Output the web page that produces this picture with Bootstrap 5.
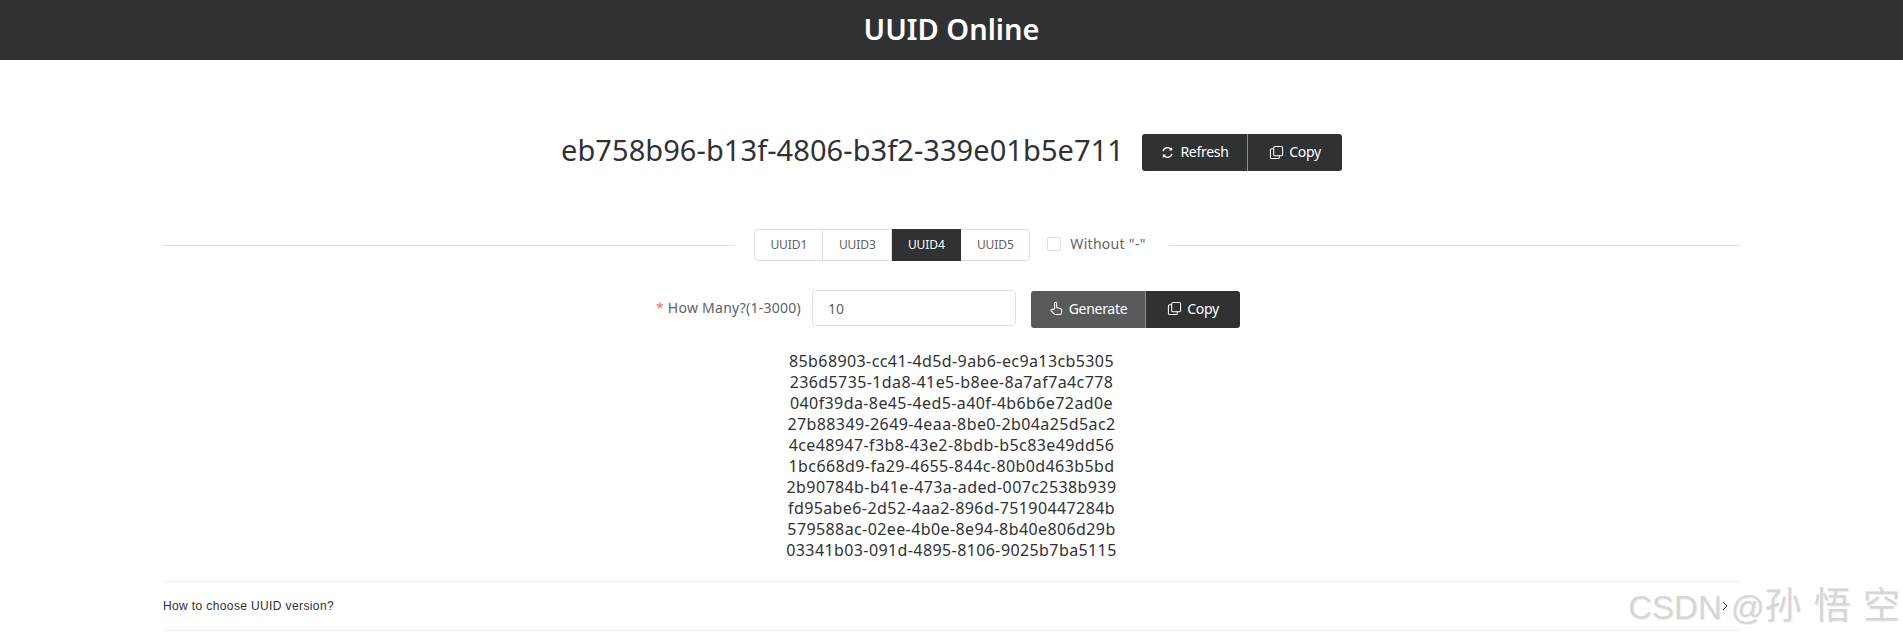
<!DOCTYPE html>
<html lang="en">
<head>
    <meta charset="UTF-8">
    <meta name="viewport" content="width=device-width, initial-scale=1.0">
    <link href="https://cdn.jsdelivr.net/npm/bootstrap@5.3.0/dist/css/bootstrap.min.css" rel="stylesheet">
    <title>UUID Online</title>
    <style>
        body { font-family: "Noto Sans", "Noto Sans CJK SC", sans-serif; color: #303133; overflow: hidden; height: 640px; position: relative; }
        .top-bar { height: 60px; background: #303133; color: #fff; font-size: 29px; font-weight: 600; line-height: 58px; text-align: center; }
        .page-wrap { margin: 0 163px; }
        .uuid-main { padding-top: 74px; height: 169px; gap: 18px; }
        .uuid-text { font-size: 29px; letter-spacing: .07px; line-height: 32px; color: #303133; }
        .dark-btn { background: #303133; border: 0; border-radius: 0; color: #fff; font-size: 14px; letter-spacing: -.3px; line-height: 1; height: 37px; padding: 0 0 1px; display: flex; align-items: center; justify-content: center; gap: 5px; }
        .dark-btn:first-child { border-radius: 3px 0 0 3px; border-right: 1px solid #8c8d8f; }
        .dark-btn:last-child { border-radius: 0 3px 3px 0; }
        .dark-btn.light { background: #58595b; }
        .dark-btn svg { width: 15px; height: 15px; }
        .w-refresh { width: 106px; } .w-copy { width: 94px; } .w-gen { width: 115px; }
        .rule-row { height: 32px; }
        .rule-line { flex: 1; height: 1px; background: #dcdfe6; margin-top: 1px; }
        .tab-group { margin: 0 17px 0 20px; display: flex; }
        .tab-item { width: 69px; height: 32px; border: 1px solid #dcdfe6; border-left: 0; background: #fff; font-size: 12px; letter-spacing: -.1px; color: #606266; display: flex; align-items: center; justify-content: center; }
        .tab-item:first-child { border-left: 1px solid #dcdfe6; border-radius: 4px 0 0 4px; }
        .tab-item:last-child { border-radius: 0 4px 4px 0; }
        .tab-item.on { background: #303133; border-color: #303133; color: #fff; }
        .check-wrap { font-size: 14px; letter-spacing: .3px; color: #606266; gap: 9px; margin-right: 23px; margin-top: -3px; }
        .check-box { width: 14px; height: 14px; border: 1px solid #dcdfe6; border-radius: 2px; background: #fff; }
        .form-line { margin-top: 29px; height: 38px; padding-right: 7px; }
        .how-label { font-size: 14px; letter-spacing: .25px; color: #606266; margin-right: 11px; margin-top: -4px; }
        .how-label span { color: #f56c6c; }
        .how-input { width: 204px; height: 36px; border: 1px solid #dcdfe6; border-radius: 4px; font-size: 14px; color: #606266; padding: 0 15px; margin-right: 15px; margin-top: -2px; }
        .uuid-list { margin-top: 23px; font-size: 16px; letter-spacing: .4px; line-height: 21px; text-align: center; height: 230px; }
        .faq-row { height: 50px; border-top: 1px solid #ebeef5; border-bottom: 1px solid #ebeef5; font-family: "Liberation Sans", sans-serif; font-size: 12px; letter-spacing: .38px; color: #303133; }
        .faq-row svg { margin-right: 12px; }
        .water-mark { position: absolute; right: 2px; top: 585px; font-family: "Liberation Sans", "Noto Sans CJK SC", sans-serif; font-size: 33px; line-height: 44px; color: #d6d6d6; text-shadow: 1px 1px 1px #eee; white-space: nowrap; }
        .water-mark span { font-size: 37px; letter-spacing: 1px; }
    </style>
</head>
<body>
    <header class="top-bar">UUID Online</header>
    <main class="page-wrap">
        <section class="uuid-main d-flex justify-content-center align-items-start">
            <div class="uuid-text">eb758b96-b13f-4806-b3f2-339e01b5e711</div>
            <div class="d-flex">
                <button class="dark-btn w-refresh" type="button">
                    <svg viewBox="0 0 16 16" fill="none" stroke="#fff" stroke-width="1.4"><path d="M3.200 6.500a5 5 0 0 1 8.800-1.700M12.800 9.500a5 5 0 0 1-8.800 1.700"/><path d="M12.500 2.800v2.500H10M3.500 13.200v-2.500H6" stroke-width="1.100"/></svg>Refresh</button>
                <button class="dark-btn w-copy" type="button">
                    <svg viewBox="0 0 16 16" fill="none" stroke="#fff" stroke-width="1.100"><rect x="5" y="1.500" width="9.500" height="10" rx="1.500"/><path d="M5 4H3a1.500 1.500 0 0 0-1.500 1.500V13A1.500 1.500 0 0 0 3 14.500h6.500A1.500 1.500 0 0 0 11 13v-1.500"/></svg>Copy</button>
            </div>
        </section>
        <section class="rule-row d-flex align-items-center">
            <div class="rule-line"></div>
            <div class="tab-group">
                <div class="tab-item">UUID1</div>
                <div class="tab-item">UUID3</div>
                <div class="tab-item on">UUID4</div>
                <div class="tab-item">UUID5</div>
            </div>
            <div class="check-wrap d-flex align-items-center"><span class="check-box"></span>Without "-"</div>
            <div class="rule-line"></div>
        </section>
        <section class="form-line d-flex justify-content-center align-items-center">
            <label class="how-label"><span>*</span> How Many?(1-3000)</label>
            <input class="how-input" type="text" value="10">
            <div class="d-flex">
                <button class="dark-btn light w-gen" type="button">
                    <svg viewBox="0 0 16 16" fill="none" stroke="#fff" stroke-width="1.100" stroke-linejoin="round"><path d="M6 8V2.400a1.100 1.100 0 0 1 2.200 0V7l4.300 1.200c.8.2 1.200.9 1.100 1.700l-.5 3.300c-.1.8-.7 1.300-1.500 1.300H7.200c-.5 0-1-.2-1.300-.6L2.500 10.700c-.5-.6-.3-1.300.3-1.600.5-.3 1.100-.2 1.500.2z"/></svg>Generate</button>
                <button class="dark-btn w-copy" type="button">
                    <svg viewBox="0 0 16 16" fill="none" stroke="#fff" stroke-width="1.100"><rect x="5" y="1.500" width="9.500" height="10" rx="1.500"/><path d="M5 4H3a1.500 1.500 0 0 0-1.500 1.500V13A1.500 1.500 0 0 0 3 14.500h6.500A1.500 1.500 0 0 0 11 13v-1.500"/></svg>Copy</button>
            </div>
        </section>
        <section class="uuid-list">
            85b68903-cc41-4d5d-9ab6-ec9a13cb5305<br>
            236d5735-1da8-41e5-b8ee-8a7af7a4c778<br>
            040f39da-8e45-4ed5-a40f-4b6b6e72ad0e<br>
            27b88349-2649-4eaa-8be0-2b04a25d5ac2<br>
            4ce48947-f3b8-43e2-8bdb-b5c83e49dd56<br>
            1bc668d9-fa29-4655-844c-80b0d463b5bd<br>
            2b90784b-b41e-473a-aded-007c2538b939<br>
            fd95abe6-2d52-4aa2-896d-75190447284b<br>
            579588ac-02ee-4b0e-8e94-8b40e806d29b<br>
            03341b03-091d-4895-8106-9025b7ba5115
        </section>
        <section class="faq-row d-flex justify-content-between align-items-center">
            <span>How to choose UUID version?</span>
            <svg width="6" height="10" viewBox="0 0 6 10" fill="none" stroke="#303133" stroke-width="1"><path d="M1 1l4 4-4 4"/></svg>
        </section>
    </main>
    <div class="water-mark">CSDN @<span>孙 悟 空</span></div>
    <script src="https://cdn.jsdelivr.net/npm/bootstrap@5.3.0/dist/js/bootstrap.bundle.min.js"></script>
</body>
</html>
